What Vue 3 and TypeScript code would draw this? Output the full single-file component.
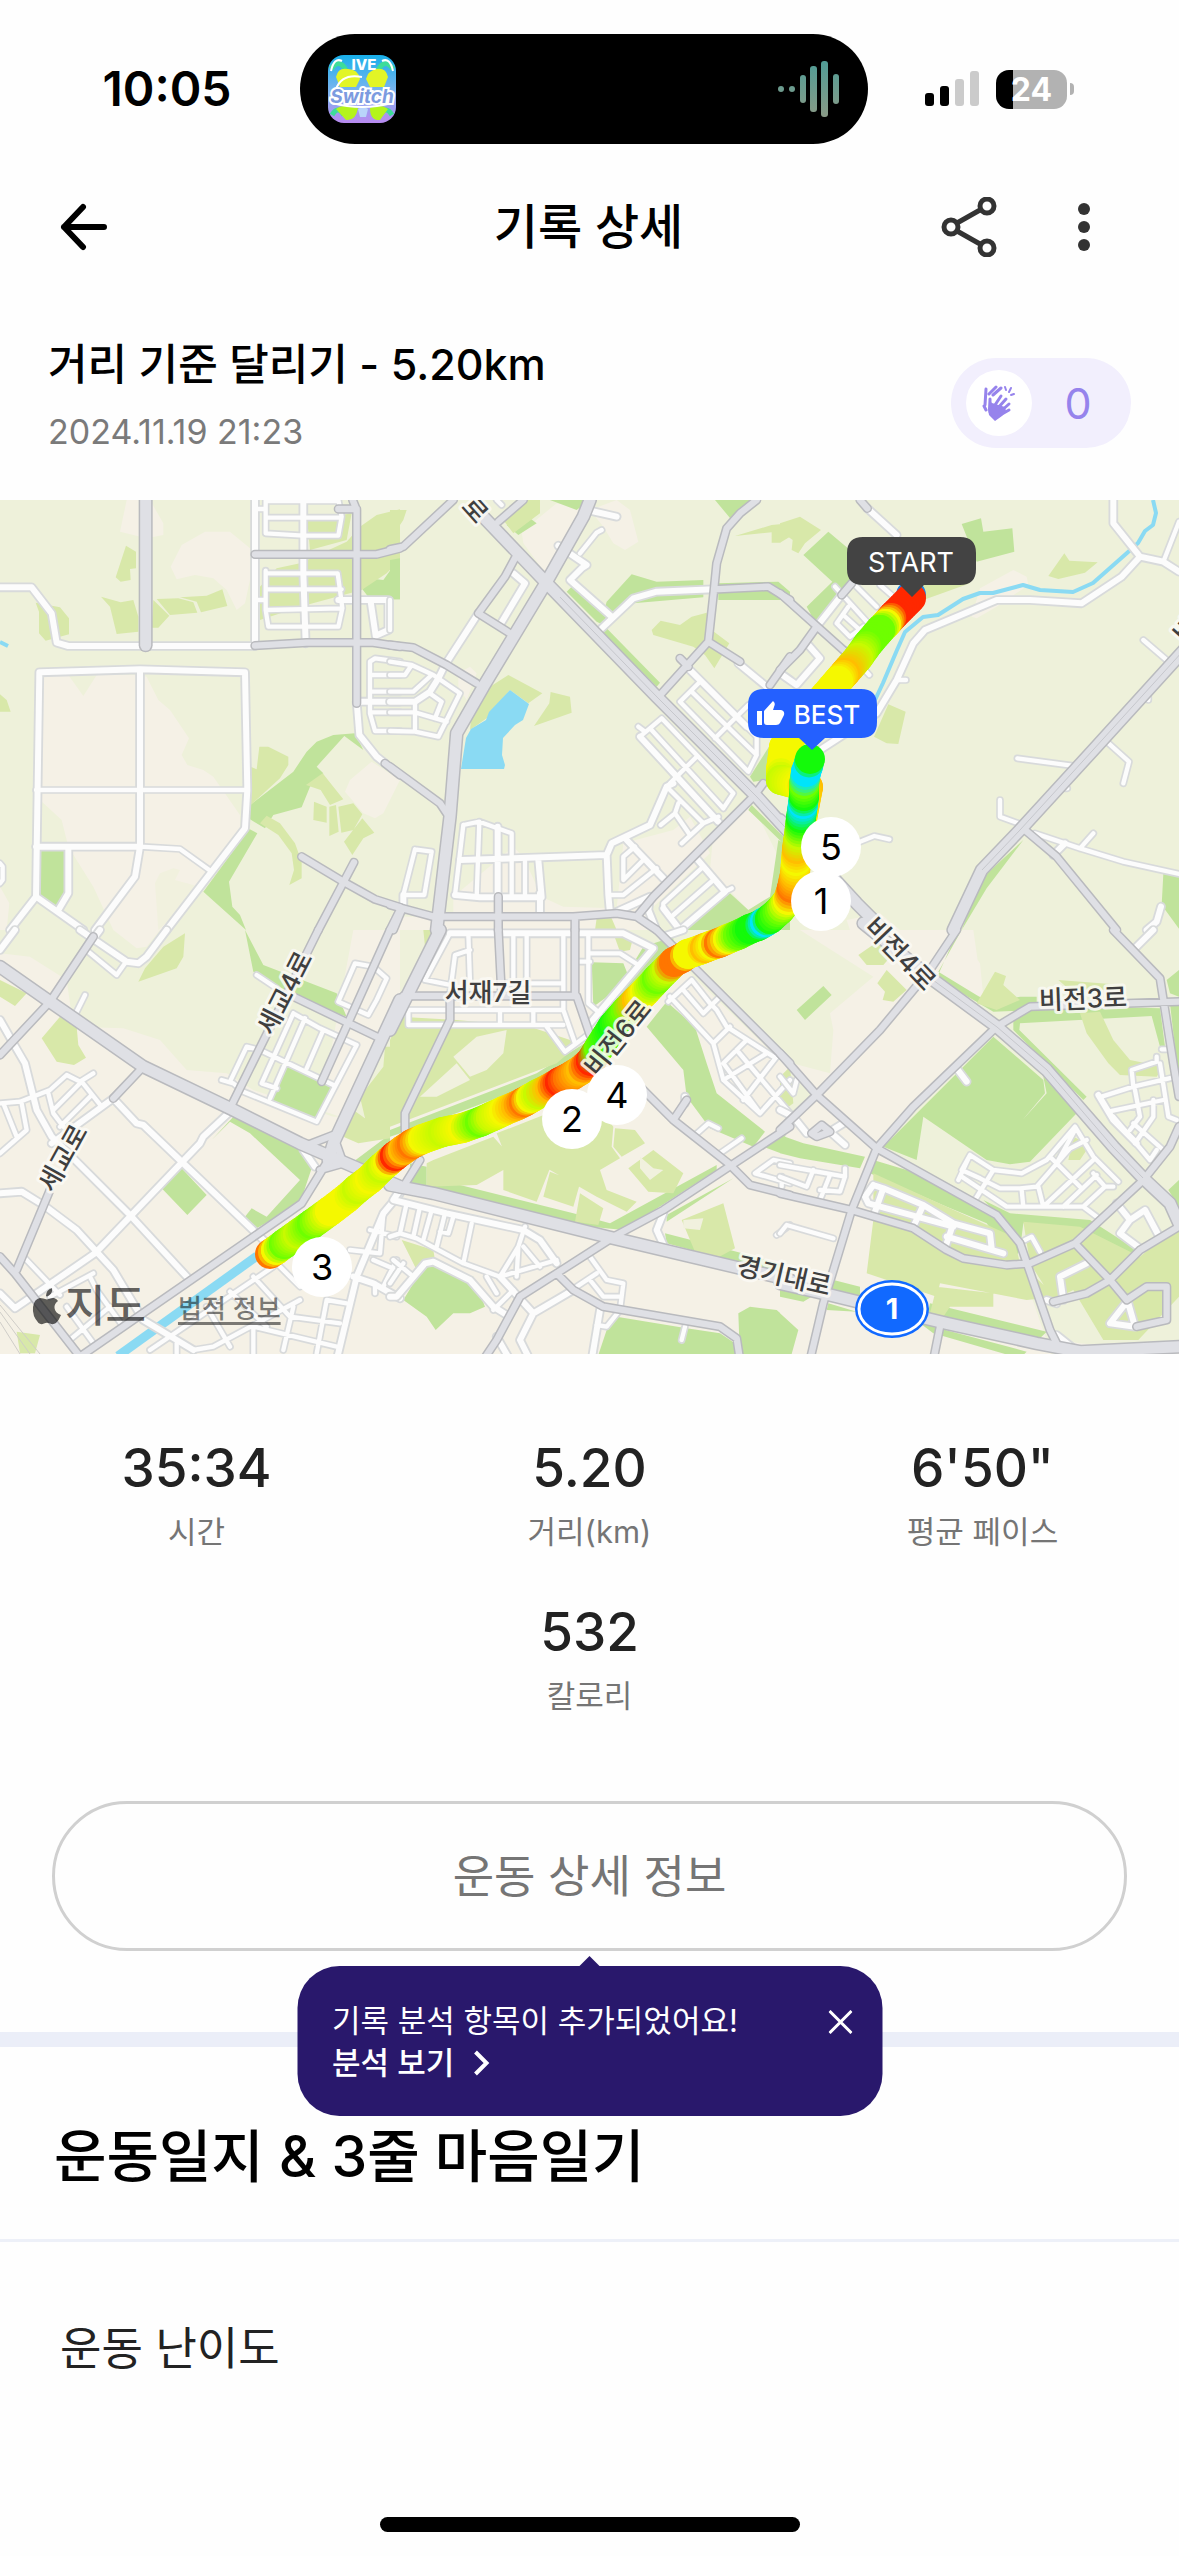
<script setup lang="ts">
interface Tile {
  x: number
  y: number
  sand: string
  land?: string
  meadow: string
  park: string
  lane: string
  street: string
  avenue: string
  highway: string
}

// Map tiles are drawn at three units per pixel, placed by their top left corner.
const tiles: Tile[] = [
  {
    x: 0,
    y: 0,
    sand: 'M125 525H205L250 588 290 525H420L440 530 475 600 510 630 567 715 545 765 562 795 610 810 640 830 720 945V1000L640 1110 500 1290H340L280 1160 205 1040 185 960 120 900ZM380 0H450L490 70V105L440 115 360 95ZM615 95H690L750 145V240L735 310 710 330 680 270 640 235 585 225 530 238 512 200 545 135ZM1035 875L1050 840 1115 785 1200 840 1150 940 1125 955 1090 940ZM0 1160L28 1210 20 1290H0Z',
    land: 'M465 1150L480 1120 520 1105 540 1110 525 1140 590 1158 560 1210 475 1290Z',
    meadow: 'M378 137L408 155V205L390 207 392 240 362 245 347 232ZM303 290L362 307 400 300 415 350V395L350 402 330 320ZM460 300L508 347 475 383H455ZM470 297L535 295 580 307 592 338 510 345ZM540 292L620 287 667 268 682 318 603 337 590 305ZM107 308L180 322 207 355V403L137 422 117 400V335ZM0 583L20 600 32 635H0ZM922 62L1055 40 1040 120 930 150ZM780 260L830 205 900 190 1040 125 1080 80 1130 45 1200 28V180L1160 220 1085 270 900 320 780 360ZM752 800L770 808 778 740H805L865 770V795L840 835 752 915ZM918 855L968 820 1000 860 1030 898 990 915 962 870ZM942 905L980 920V968L940 960ZM988 920L1008 915 1016 995 988 1008ZM1015 920L1060 910 1087 943 1060 990 1024 998ZM1087 955L1123 998 1090 1015 1057 1065 1032 1025ZM780 970L800 947 840 970 885 1030 905 1085V1135L868 1155 882 1110 875 1060 835 1005Z',
    park: 'M1085 265L1125 237 1150 240 1200 170V298H1110ZM750 915L880 815 920 755 950 725 1000 705 1065 700 1090 750 1033 708 950 800 970 820 930 860 905 922 820 945 795 985 750 958ZM748 987L772 1000 687 1145 697 1220 720 1245 738 1290 610 1175ZM120 1050H192V1180L170 1218 120 1185Z',
    lane: 'M797 0V100L910 107H1015L1025 50 1015 0M797 53H1020M797 3H1010M765 27H797M797 212V330L805 380H1015L1027 325 1020 270 1013 220H797M797 268H1025M797 330L1025 325M765 300H797M1200 485L1125 475 1110 485V640L1125 693H1200M1110 525H1200M1110 575H1200M1110 637H1200M108 870H742M420 1040L540 1047 635 1115M0 1090L8 1100V1140L0 1150',
    street: 'M0 262H95L155 340 170 428 205 438H765M765 0V437M910 0V220L917 430M1015 300H1165V390L1127 407 1112 305M1070 605H1200M1070 605L1078 705 1130 770 1155 790M118 517L420 508 735 517 742 870 735 985 635 1115 500 1290M118 517L108 1190M420 508V1040L405 1130 285 1290M108 1040H420M205 1040V1180L175 1230M30 1290L108 1190 250 1290',
    avenue: 'M765 163H1130L1200 145M1070 610V30L1058 0M1015 27H1070M765 437L920 428H1120L1200 440M905 1070L1030 1145 1125 1198 1200 1222M1062 1087L955 1290M1200 1230L1170 1290M1155 790L1200 825',
    highway: 'M437 0V436',
  },
  {
    x: 390,
    y: 0,
    sand: 'M395 95L500 10 600 20 560 120 470 225 400 130ZM600 30L680 0 720 30 745 125 705 150 670 130 640 80ZM205 520L240 500 260 520 230 600 205 560ZM970 1000L1075 920 1110 960 1160 1060V1130L1140 1190 1075 1230 960 1110ZM190 1190L370 1040 400 1070 455 1190 520 1220 680 1225 700 1030 850 990 900 950 960 1060 780 1230 800 1290H0V1250H190ZM0 840L15 850 0 890Z',
    meadow: 'M0 30H50L40 60 0 120ZM340 60L390 0H450V40L370 100ZM245 640L300 560 355 525 457 580 415 610 360 570 290 655 240 690ZM482 576L540 590 545 638 432 678 478 610ZM785 390L812 362 870 375 905 350 950 338 965 390 1018 430 973 505 945 465 910 440 790 405ZM1035 108L1145 75 1200 70V110L1170 128H1145V97ZM620 1255H665L680 1290H615Z',
    park: 'M480 0H600L560 30ZM350 75L385 105 440 70 400 40ZM0 180L30 175V298H0ZM650 305L725 223 800 245 940 240V292L730 310 650 380 620 365 530 275 545 260 640 340ZM650 385L810 548 800 560 640 400ZM975 0H1100L1025 60ZM985 250L1165 245 1200 275V300H985ZM1200 640L1080 830 1090 845 1130 840 1200 760ZM1085 915L1200 1030V1050L1075 930ZM1020 1180L1075 1230 1140 1190 1165 1020 1200 1040V1290H880Z',
    lane: 'M0 485L65 495 130 525 210 580 145 710 75 695 0 693M0 525H45L65 495M0 575H70L125 525M115 577L155 605 135 655M0 637H75L170 665M75 605V695M895 505L1100 710V765L1075 815 870 605 930 545M905 575L1100 765M975 715L1075 615M745 680L765 695M750 710L815 655 1030 880 1000 925M780 685L1000 925M920 770L840 850M840 870L940 970M865 910L855 940 812 975M855 940L900 1005M985 950L940 970 875 1030M220 975L195 1185M220 975L268 965 365 1000V1185M268 965L260 1190M405 1080V1190M655 1185H700L800 1105M735 1040L700 1070V1140L760 1080M820 1225V1210L940 1100M850 1245L970 1140M1005 1175L1025 1165M75 1048L125 1055 103 1185H40L75 1048M0 300V390M635 90L620 98 570 160M320 0L335 15',
    street: 'M605 33L680 50M505 137L590 195 575 205 540 240 665 350M635 385L730 295 800 275 970 268M370 220L405 250 330 375M265 340L165 495 145 535 120 575 75 605H0M895 505L1070 680M1045 490L1130 560M1170 520L1200 540M750 710L985 965M850 850L830 860 780 975 665 1030 650 1065 370 1075 210 1080M195 1185L270 1192H455L445 1080M323 980V1190M450 1180V1245M650 1065L655 1185 660 1240M710 1020L820 1135M670 1240L780 1190 775 1230 795 1280M915 1070L1005 1175 870 1290 820 1225M40 1185V1230',
    avenue: 'M0 148L40 140 190 0M325 65L400 0M380 165L345 230 265 340 360 400M0 435L70 443 170 495 260 550M0 800L150 910 170 940M1100 0L1050 40 1010 85 980 190 972 270 955 425 815 580M972 268L1135 260 1200 300M955 425L1050 485M895 500L870 475M1200 470L1140 555M1120 850L1090 890 920 1060 790 1190 740 1250M0 1215L130 1250H550L680 1240 740 1250 800 1290M325 1190V1290M555 1250V1290M35 1230L10 1290',
    highway: 'M600 0L580 50 470 245 280 560 200 700 180 950 140 1290M270 40L480 260 800 590 1100 890 1200 1000',
  },
  {
    x: 780,
    y: 0,
    sand: 'M575 350L600 265 700 210 740 230 745 255 650 320 590 355ZM200 1260L300 1240 360 1290H210Z',
    meadow: 'M0 70L60 50 123 90 75 130 55 160 35 150 38 120 10 100 0 130ZM853 160L868 182 953 187 915 218 835 237 805 228ZM325 613L377 635 355 732 320 730 282 710ZM430 255L570 250 430 300Z',
    park: 'M545 72L603 55 610 95 697 85 703 155 590 185ZM70 165L145 95 210 150V240L110 375 80 320 157 245ZM730 1020L620 1165 545 1290 600 1140ZM1150 1122L1200 1130V1290L1145 1215Z',
    lane: 'M165 260L265 370M230 260L290 320M300 255L340 290M205 320L170 370 210 410 250 380M190 345L240 390M350 540H378M1150 185L1197 65M1090 420L1160 480M1105 590V600M980 725L1047 785 1030 850M712 775L875 797M660 900V950L715 970M765 1000L900 1045 1030 1085 1197 1122M940 1000L900 1045M240 1025L283 1008 328 1018M855 865H862M200 450L268 525',
    street: 'M262 25L350 105M110 380L185 285M85 435L120 475 50 555 0 520M1000 0V70L1080 170 1025 230 905 310 750 300H650L435 390 400 430 350 540 290 640 120 750M1080 170L1150 185 1197 215M855 1030L820 1065M1143 1220L1130 1265 1100 1290',
    avenue: 'M240 0L262 25M0 280L190 450M215 250L185 285M110 380L60 450 0 510M735 990L830 1070 1010 1290',
    highway: 'M1240 420L940 750 720 990 605 1110 520 1290M0 960L230 1210 310 1290',
  },
  {
    x: 0,
    y: 430,
    sand: 'M0 70L90 80 200 150 220 290 370 295 480 330 560 420 680 430 760 480 1000 560H1200V1290H0ZM340 0H480L440 50 410 55ZM1060 0H1200V200L1020 560 960 540Z',
    meadow: 'M555 10L550 80 530 115 415 155 435 115 490 50ZM180 260L230 290 235 345 258 383 222 405 170 395 125 325ZM0 150L80 190 45 228 0 200ZM1155 350L1200 350V620L1075 640 1030 620 1060 540 1095 565 1080 500 1150 410ZM50 1205L120 1215 105 1270H60Z',
    park: 'M735 0L790 105 1010 190 1040 260 900 210 760 125ZM865 405L1000 465 950 565 815 510ZM700 560L900 650 940 700 900 820 770 895 735 860 755 835 800 860 900 750 750 610 690 575 635 630ZM545 715L620 795 562 855 485 775ZM1060 695L1200 590V740L1100 720Z',
    lane: 'M265 65L350 135 375 100M255 195L230 245M0 520L60 515 150 480 200 435 240 455 280 430M245 455L305 530M145 490L160 550 190 590M160 540L240 460M180 590L275 495M10 520L50 620M65 520L80 600 0 670M75 985L180 1095M215 1225L330 1130M270 1040L290 1080 370 1190M280 1240L200 1130M150 1100L280 1030M1015 215L1065 100 1120 110 1160 145 1130 210 1105 255ZM880 250L785 460 830 475M665 450L700 460 730 485 950 575 1070 345 960 295 880 250M690 455L740 350 780 360 1000 465M915 265L810 505M970 300L920 415M770 135L830 175M450 1260L835 1000M530 1290V1240M580 1260L640 1250 900 1110M690 1085L800 1190M760 1040L870 1160M830 1000L900 1070M1050 960L1140 970 1150 850M1110 900L1190 920M1120 990L1190 1020M760 1190L1010 1250M870 1160L1020 1180M850 1260L880 1130M950 1270L980 1110 1040 1120M620 1130L690 1250M760 1190V1290M1125 1060V1090M1190 990L1150 1070',
    street: 'M0 60L45 0M240 0L380 95 415 100 440 80 500 0M285 20L300 0M0 270L40 340 75 400 110 540 155 620 390 855 565 1045M155 640L340 505 410 580 430 585 790 930M685 550L610 620 600 640 285 970 45 1135 0 1090M0 790L65 785 130 825 230 900 340 1020 430 1170 580 1260M1200 790L1150 850 1070 1040 1010 1290M1060 1040L1120 1060 1200 1105M910 660L945 710',
    avenue: 'M280 20L150 215 0 375M955 0L690 535M1170 0L965 455M880 200L1130 320M430 410L340 505M150 780L50 1020M0 980L45 1030 240 1280M910 650L1000 615 1030 700 960 720M985 690L905 820 870 845 240 1280',
    highway: 'M0 110L150 215 430 410 690 535 900 640 1200 770M1200 210L1000 640 985 690',
  },
  {
    x: 390,
    y: 430,
    sand: 'M0 250L30 200 150 0H700L830 100 900 130 1200 420V1290H0Z',
    meadow: 'M30 260L200 270 420 290 570 340 500 400 0 590V330ZM320 610L600 500 670 590 665 650 690 685 630 720 650 780 740 815 710 845 620 800 480 720 340 660ZM130 690L310 620 345 660 480 715 440 815 340 780V720L260 765 110 770V700ZM675 595L735 600 765 640 695 680 670 650ZM790 660L880 730 850 790 775 785 715 715ZM480 725L570 760 550 830 460 800ZM570 790L640 835 625 885 555 875ZM875 870L1000 820 1035 955 980 985 915 965ZM35 930L130 960 135 990 80 1020ZM670 10L730 20 720 60 690 65ZM100 0H160L110 100Z',
    land: 'M260 320L350 300 340 370 290 420 240 440 190 380ZM750 680L790 715 820 720 780 750 750 715ZM880 870L940 865 930 900 880 895ZM90 500L200 400 240 450 140 500Z',
    park: 'M0 600L440 430 600 330 700 150 760 50 850 20V60L600 400 90 590 0 620ZM605 97L700 100 720 150 610 230ZM60 700L110 710V765H185V730H210V765L550 850 660 880 980 705V720L700 900 550 885 60 760ZM770 290L830 215 915 290 950 400 980 490 1125 605 1090 650 960 595 890 500 880 420ZM1120 650L1200 610V680ZM40 1110L100 1010 130 995 250 1040 285 1130 240 1150 190 1150 137 1200 110 1160ZM680 1160L890 1195 990 1210 1035 1240 1040 1290H620L650 1200ZM1045 1150L1080 1130 1160 1140 1200 1175V1290H1050ZM825 910L1040 965 1200 1010V1040L830 940ZM1030 745L830 875V855Z',
    lane: 'M180 10L105 150 180 165M235 10L240 160M240 60L195 75 180 190M370 10V160M410 10V160M520 10V240M335 160H520M595 10V220L630 250M600 70H690L745 105M560 95H600M55 240H520L555 340M55 240V285H520M330 240V285M430 240V280M470 290L525 365 600 310M905 150L835 215M905 150L960 220 980 240 1010 290 1150 380M840 200L970 340 1000 450 1110 550 1200 450M880 180L940 250 990 200M970 340L1020 290M1000 400L1070 330M1000 450L1130 370M1060 510L1160 380M1040 360L1200 550M1000 400L1110 550M910 620L955 580 985 595M990 670L1055 625M1200 700L1150 690 1095 730 1200 760M1175 740V770M50 820L30 910 0 920M90 830L70 920M125 840L100 930M165 850L140 950M190 860L175 910 150 905M30 910L80 925 220 1000 330 1040 500 990M245 880L220 1000M405 890L385 950 330 1040M400 950L450 1010M385 950L380 1040M290 1040L320 1090M370 1080L310 1140M600 980L650 1050 700 1060 690 1140 650 1190 620 1185M500 1110L620 1030M600 1050L640 1100H690M885 1190L875 1230M1160 915L1200 885M10 990L70 1040M0 1060L40 1000',
    street: 'M180 10H700L790 55 600 280M820 20L880 0M30 780L10 810 170 850 400 900 450 930 500 1000M330 1040L430 1150 390 1230 420 1290M430 1150L550 1080M0 1100H20L105 1000 130 995 240 1050 310 1130 350 1155M630 1140L605 1290M820 850L800 900 825 955M885 500V520M320 1220L360 1290',
    avenue: 'M40 198H560L600 315M555 0V198M325 0L335 198M180 200V270L45 550V600M90 690L40 770M1200 590L820 840 680 915 500 1030 390 1100 320 1230 280 1290M800 0L1200 400M740 460L850 570 1015 700 1080 765 1200 795M850 570L890 510M500 1030L550 1080 640 1130 990 1190 1040 1225 1050 1290',
    highway: 'M150 0L0 300M0 765L130 790 650 920 1200 1050',
  },
  {
    x: 780,
    y: 430,
    sand: 'M60 0H530L600 100 610 200 450 170 640 300 300 640 620 900 720 1000 820 1290H0V640L110 495 0 390 150 430 160 300 150 250 280 140ZM530 0H580L600 140 480 130ZM560 560L600 390 640 440 690 500 695 560 660 620 620 640ZM900 1290L840 1230 900 1240 1200 1270V1290Z',
    land: 'M690 270L1110 250 1140 400 1200 500V900L1090 760 800 440ZM650 330L790 450 795 490 690 620 610 650 560 560 550 520 430 555ZM410 690L470 597 640 655 730 700 860 610 1000 720 1040 800 940 870 680 840 540 780Z',
    meadow: 'M235 75L300 30 350 60 310 105 260 105ZM320 120L380 180 340 215 308 210 315 185 292 160ZM590 220L645 125 678 138 670 165 720 210 650 240ZM835 150L1030 165 1020 180 870 180ZM900 250L960 245 1000 330 1050 390 1150 410 1130 440 1020 435 985 400 920 310ZM280 730L500 830 700 920 720 1000 830 1100 740 1110 480 1060 470 1100 260 1030 280 870ZM730 875L900 890 1080 980 1197 880V1100L1075 1230H970L880 1080 820 1110 750 1000ZM865 690L880 620 930 645 900 690ZM470 1070L640 1090 640 1130 510 1130 490 1160 450 1150ZM0 440L30 410 40 520 0 550Z',
    park: 'M530 10L545 0 475 125 630 220 720 200 770 200V240L640 245 470 145ZM50 240L130 168 155 195 75 270ZM700 260L790 225 1140 235 1155 350 1140 350 1115 258 720 280 718 300 920 500 910 510 700 300ZM640 320L790 450 795 490 660 650 610 655 430 560 410 690 310 650ZM430 560L610 655 660 645 800 490 790 440 890 550 750 695 690 703 620 690ZM0 615L70 640 255 680 240 715 60 685 0 670ZM280 690L380 720 650 860 720 960 700 990 620 880 500 830 270 730ZM610 810L690 850 930 870 1070 960 1040 1010 930 910 730 880 720 960 660 860ZM140 1045L240 1070V1100L150 1080ZM450 1120L800 1205 780 1225 440 1160ZM145 1120L230 1145 140 1140ZM420 1180L740 1265 720 1285 460 1210ZM0 1150L55 1200 30 1290H0ZM1160 150L1197 120V200L1170 190ZM1170 220H1197V460ZM1165 780L1197 750V830ZM0 1080L95 1100 70 1115 0 1100Z',
    lane: 'M535 750L570 675 640 720 725 730 800 690 885 590 940 680 1015 755M570 675L545 720 600 745M545 740L680 830H910L950 860M640 720L585 810M600 745L660 775H720L770 770 870 655 920 630M725 780L730 830M775 770L790 830 945 685M810 680L900 770M850 830L950 735M885 600L830 700M910 830L975 770M1000 770L975 770 940 730M965 500L1060 470 1190 440M1060 470L1055 420 1130 395V380M985 545L1150 510M1065 480L1080 560 1050 600M1120 510V560L1065 640M1000 560L1110 690 1130 660M1140 400L1165 560 1190 570M1060 580L1150 660M0 705L195 740 180 785 120 780M100 720L80 770M150 735L120 810M195 740V715M0 740L80 770M0 910L20 885 160 925M735 930L755 920 780 965M1145 358H1165M0 440L40 490 50 450',
    street: 'M280 765L255 800 265 820 520 890M310 775L430 825 520 880 630 910 635 955M310 775L285 845M430 825L400 890M520 880L495 955M500 920L670 970M280 765L310 775M530 415L560 455M0 540L40 560 80 610M150 605L190 580M150 605L195 645M955 495L1000 570 1070 640M1010 820L1050 870 1095 840 1135 915M1050 870L1020 910 1080 955M920 1000L840 1040 850 1110M800 1110L830 1120M1045 1110L990 1180 1065 1190 1045 1120M1070 50L1120 0M830 1215L880 1255',
    avenue: 'M530 0L450 120 300 300 110 495 0 600M650 290L750 230 1197 215M1000 0L1140 145 1180 400 1197 500M650 290L400 530 290 655 215 840 130 1120 90 1290M0 370L110 495 290 655 650 855 720 940 810 1200 830 1240M0 790L215 840 400 895 500 960 550 985 680 1005 750 1000 885 940 1090 750 1170 650 1197 590M885 940L990 1050 1040 1110 1100 1070H1160V1170L1070 1190M990 1050L1080 960 1197 890M990 1050L920 1090 820 1115M480 1190L460 1290M95 610L125 585 150 605 110 620Z',
    highway: 'M250 -20L460 150 650 290 800 420 1000 650 1090 745 1170 820 1197 880M0 1060L130 1090 500 1180 770 1240 900 1265 1197 1250',
  },
]

type Rgb = [number, number, number]
type Stop = [number, number, Rgb]

const red: Rgb = [255, 40, 0]
const orange: Rgb = [255, 118, 0]
const amber: Rgb = [255, 190, 0]
const yellow: Rgb = [245, 248, 0]
const lime: Rgb = [200, 250, 0]
const leaf: Rgb = [110, 255, 0]
const green: Rgb = [20, 250, 10]
const cyan: Rgb = [0, 228, 250]
const blue: Rgb = [30, 130, 230]

// Each stop carries the runner's pace as a colour; the outward leg lies under the return leg.
const outward: Stop[] = [
  [911, 98, red], [893, 116, red], [886, 124, yellow], [880, 130, leaf], [868, 144, leaf],
  [858, 158, lime], [845, 173, amber], [838, 181, yellow], [800, 225, yellow], [784, 247, yellow],
  [781, 270, yellow], [781, 280, lime], [800, 285, yellow], [808, 287, amber], [800, 330, yellow],
]
const homeward: Stop[] = [
  [270, 754, orange], [276, 750, yellow], [284, 744, leaf], [298, 734, lime], [312, 724, leaf],
  [330, 711, yellow], [347, 698, yellow], [357, 689, lime], [370, 679, yellow], [381, 668, lime],
  [388, 662, yellow], [395, 656, red], [403, 650, amber], [412, 644, orange], [423, 639, yellow], [443, 632, lime],
  [463, 628, yellow], [480, 622, leaf], [491, 617, lime], [504, 611, yellow], [516, 606, amber], [524, 602, orange],
  [531, 598, yellow], [538, 594, lime], [550, 588, amber], [560, 582, red], [568, 578, orange], [581, 570, amber],
  [591, 561, red], [599, 548, leaf], [613, 526, green], [626, 511, leaf], [637, 500, amber],
  [645, 492, yellow], [657, 479, leaf], [667, 469, lime], [674, 462, orange], [682, 458, orange],
  [688, 454, yellow], [700, 450, yellow], [705, 448, amber], [713, 445, yellow], [719, 443, orange], [728, 439, yellow],
  [738, 435, leaf], [750, 429, green], [758, 426, green], [765, 422, cyan], [770, 419, green], [780, 410, leaf],
  [788, 400, yellow], [792, 388, orange], [795, 374, amber], [796, 361, yellow], [797, 349, amber],
  [799, 335, lime], [801, 318, green], [803, 304, cyan], [804, 296, green], [804, 284, leaf], [806, 272, cyan],
  [808, 266, cyan], [810, 259, green],
]

function discs(stops: Stop[]) {
  const out: { x: number; y: number; fill: string }[] = []
  for (let i = 0; i < stops.length - 1; i++) {
    const [x1, y1, c1] = stops[i]
    const [x2, y2, c2] = stops[i + 1]
    const steps = Math.max(1, Math.round(Math.hypot(x2 - x1, y2 - y1) / 3))
    for (let s = 0; s <= steps; s++) {
      const t = s / steps
      const rgb = c1.map((v, k) => Math.round(v + (c2[k] - v) * t))
      out.push({ x: x1 + (x2 - x1) * t, y: y1 + (y2 - y1) * t, fill: `rgb(${rgb.join(',')})` })
    }
  }
  return out
}

const trail = [{ x: 911, y: 95, fill: `rgb(${blue.join(',')})` }, ...discs(outward), ...discs(homeward)]

const roadNames = [
  { text: '세교4로', x: 285, y: 493, turn: -63 },
  { text: '세교로', x: 63, y: 658, turn: -61 },
  { text: '서재7길', x: 488, y: 493, turn: 0 },
  { text: '비전6로', x: 618, y: 538, turn: -51 },
  { text: '비전4로', x: 900, y: 454, turn: 46 },
  { text: '비전3로', x: 1083, y: 499, turn: -2 },
  { text: '경기대로', x: 784, y: 776, turn: 13 },
  { text: '로', x: 475, y: 10, turn: 48 },
  { text: '비', x: 1186, y: 130, turn: -48 },
]

const kmMarks = [
  { n: 5, x: 831, y: 347 },
  { n: 1, x: 821, y: 401 },
  { n: 4, x: 617, y: 595 },
  { n: 2, x: 572, y: 619 },
  { n: 3, x: 322, y: 767 },
]

const stats = [
  { value: '35:34', label: '시간' },
  { value: '5.20', label: '거리(km)' },
  { value: '6\'50"', label: '평균 페이스' },
  { value: '532', label: '칼로리' },
]
</script>

<template>
  <div class="screen">
    <div class="status">
      <span class="clock">10:05</span>
      <div class="island">
        <svg class="cover" viewBox="0 0 68 68" aria-hidden="true">
          <defs>
            <linearGradient id="cover-bg" x1="0" y1="0" x2="0" y2="1">
              <stop offset="0" stop-color="#18b0ea" />
              <stop offset=".55" stop-color="#7fb4f0" />
              <stop offset="1" stop-color="#b98af0" />
            </linearGradient>
            <clipPath id="cover-clip"><rect width="68" height="68" rx="16" /></clipPath>
          </defs>
          <g clip-path="url(#cover-clip)">
            <rect width="68" height="68" fill="url(#cover-bg)" />
            <path d="M3 14Q10 4 16 12T10 24M65 14Q58 4 52 12T58 24M4 60Q10 50 16 60M64 60Q58 50 52 60" fill="none" stroke="#3ddc9a" stroke-width="5" />
            <path d="M8 22Q10 12 20 14Q30 14 32 24L28 32H12ZM60 22Q58 12 48 14Q40 16 38 24L42 32H56Z" fill="#e2f526" />
            <path d="M8 54Q16 48 30 53Q28 66 18 65ZM60 54Q52 48 42 53Q42 66 52 65Z" fill="#b4f41c" />
            <path d="M30 54Q35 50 40 54L38 62H32Z" fill="#b9d5fa" />
            <path d="M3 16Q6 2 14 6M65 16Q62 2 54 6M4 48Q34 56 64 48M8 34Q14 18 34 22" fill="none" stroke="#fff" stroke-width="2" />
            <text x="36" y="15" class="cover-top">IVE</text>
            <text x="34" y="48" class="cover-name">Switch</text>
          </g>
        </svg>
        <svg class="wave" viewBox="0 0 62 58" aria-hidden="true">
          <defs>
            <linearGradient id="wave-ink" gradientUnits="userSpaceOnUse" x1="0" y1="0" x2="0" y2="58">
              <stop offset="0" stop-color="#4f9c96" />
              <stop offset="1" stop-color="#8a9a86" />
            </linearGradient>
          </defs>
          <g fill="url(#wave-ink)">
            <circle cx="3" cy="29" r="3" /><circle cx="14" cy="29" r="3" />
            <rect x="22" y="15" width="6" height="28" rx="3" />
            <rect x="32" y="6" width="7" height="46" rx="3" />
            <rect x="43" y="1" width="7" height="56" rx="3" />
            <rect x="55" y="14" width="6" height="30" rx="3" />
          </g>
        </svg>
      </div>
      <div class="radios">
        <svg class="signal" viewBox="0 0 54 36" aria-hidden="true">
          <rect x="0" y="22" width="9" height="13" rx="3" />
          <rect x="15" y="15" width="9" height="20" rx="3" />
          <rect x="30" y="8" width="9" height="27" rx="3" fill="#cbcbcb" />
          <rect x="45" y="0" width="9" height="35" rx="3" fill="#cbcbcb" />
        </svg>
        <div class="battery">24</div>
      </div>
    </div>

    <header class="nav">
      <button class="icon-btn" type="button" aria-label="뒤로">
        <svg width="48" height="48" viewBox="0 0 48 48"><path d="M23 4L4 24 23 44M4 24H44" fill="none" stroke="#000" stroke-width="6" stroke-linecap="round" stroke-linejoin="round" /></svg>
      </button>
      <h1>기록 상세</h1>
      <div class="nav-actions">
        <button class="icon-btn" type="button" aria-label="공유">
          <svg width="56" height="60" viewBox="0 0 56 60"><g fill="none" stroke="#333" stroke-width="5"><path d="M16 26L39 13M16 34L39 47" /><circle cx="10" cy="30" r="7" /><circle cx="46" cy="9" r="7" /><circle cx="46" cy="51" r="7" /></g></svg>
        </button>
        <button class="icon-btn" type="button" aria-label="더보기">
          <svg width="14" height="48" viewBox="0 0 14 48" fill="#333"><circle cx="7" cy="6" r="6" /><circle cx="7" cy="24" r="6" /><circle cx="7" cy="42" r="6" /></svg>
        </button>
      </div>
    </header>

    <section class="record">
      <div>
        <h2>거리 기준 달리기 - 5.20km</h2>
        <time datetime="2024-11-19T21:23">2024.11.19 21:23</time>
      </div>
      <button class="cheer" type="button" aria-label="응원 0">
        <span class="cheer-icon">
          <svg width="36" height="36" viewBox="0 0 36 36" fill="none" stroke="#9683ec" stroke-linecap="round">
            <path d="M8 15L11 18 24 22 25 26 21 31 14 36 8 30 7 24Z" fill="#9683ec" stroke="none" />
            <path d="M9 27V14M12 23L20 11M16 24L25 14M19 27L28 19M21 29L28 25" stroke-width="3" />
            <path d="M4 20L5 4M3 21L5 25M8 9L15 2M12 10L20 3" stroke-width="3" />
            <path d="M25 5L24 2M28 7L30 3M30 10L33 9" stroke-width="2" />
          </svg>
        </span>
        <span class="cheer-count">0</span>
      </button>
    </section>

    <section class="map" aria-label="달린 경로">
      <svg viewBox="0 0 1179 854" role="img" aria-label="지도">
        <rect width="1179" height="854" fill="#eef1da" />
        <g v-for="(t, i) in tiles" :key="`g${i}`" :transform="`translate(${t.x} ${t.y}) scale(.33333)`">
          <path :d="t.sand" fill="#f5f1e6" />
          <path v-if="t.land && i === 5" :d="t.land" fill="#eef1da" />
          <path :d="t.park" fill="#c0e39b" />
          <path :d="t.meadow" fill="#d8e8a9" />
          <path v-if="t.land && i !== 5" :d="t.land" fill="#f1f1de" />
        </g>
        <g fill="none" stroke="#8adaf3" stroke-linejoin="round">
          <path d="M510 190L529 204 523 220 515 225 503 238 502 255 505 265 504 269H461L466 238 471 229 486 220 489 212Z" fill="#8adaf3" stroke="none" />
          <path d="M1153 0L1156 13 1153 25 1145 31 1138 43 1127 53 1093 83 1073 92 1040 90 1023 85 993 93 980 93 963 99 938 115 923 117 905 132 897 150 883 183 875 200" stroke-width="4" />
          <path d="M0 142L8 146" stroke-width="4" />
          <path d="M257 756L118 856" stroke-width="9" />
        </g>
        <path d="M0 805L40 854M0 812L30 854M0 822L20 854" fill="none" stroke="#cfcdc8" stroke-width="1" />
        <g v-for="(t, i) in tiles" :key="`l${i}`" class="road" :transform="`translate(${t.x} ${t.y}) scale(.33333)`">
          <path :d="t.lane" stroke="#d8dadb" stroke-width="23" />
          <path :d="t.street" stroke="#d8dadb" stroke-width="29" />
          <path :d="t.lane" stroke="#fcfcfc" stroke-width="13" />
          <path :d="t.street" stroke="#fcfcfc" stroke-width="18" />
        </g>
        <g v-for="(t, i) in tiles" :key="`c${i}`" class="road" :transform="`translate(${t.x} ${t.y}) scale(.33333)`">
          <path :d="t.avenue" stroke="#b9babe" stroke-width="28" />
          <path :d="t.highway" stroke="#b9babe" stroke-width="42" />
        </g>
        <g v-for="(t, i) in tiles" :key="`f${i}`" class="road" :transform="`translate(${t.x} ${t.y}) scale(.33333)`">
          <path :d="t.avenue" stroke="#dfe0e5" stroke-width="19" />
          <path :d="t.highway" stroke="#dfe0e5" stroke-width="33" />
        </g>
        <path d="M560 97L657 197 757 297 850 397M933 480L997 527 1047 570 1113 647 1143 678M1193 140L1093 250 1020 330 982 370" fill="none" stroke="#c6c7cc" stroke-width="1" />

        <circle v-for="(d, i) in trail" :key="i" :cx="d.x" :cy="d.y" r="15" :fill="d.fill" />

        <text
          v-for="r in roadNames"
          :key="r.text"
          class="road-name"
          :transform="`translate(${r.x} ${r.y}) rotate(${r.turn})`"
          dy="9"
        >{{ r.text }}</text>

        <ellipse cx="892" cy="809" rx="37" ry="29" fill="#1169ff" />
        <ellipse cx="892" cy="809" rx="33" ry="25" fill="#1169ff" stroke="#fff" stroke-width="3" />
        <text class="shield" x="892" y="819">1</text>

        <g v-for="k in kmMarks" :key="k.n">
          <circle :cx="k.x" :cy="k.y" r="30" fill="#fff" />
          <text class="km" :x="k.x" :y="k.y + 13">{{ k.n }}</text>
        </g>

        <path d="M863 37H960Q976 37 976 53V69Q976 85 960 85H924L912 97 900 85H863Q847 85 847 69V53Q847 37 863 37Z" fill="#434343" />
        <text class="flag" x="911" y="72">START</text>

        <path d="M764 189H861Q877 189 877 205V222Q877 238 861 238H825L812 250 799 238H764Q748 238 748 222V205Q748 189 764 189Z" fill="#2460ff" />
        <path d="M757 211H762V225H757ZM764 211L773 201Q776 203 774 207L773 210H781Q785 211 784 215L780 223Q779 225 776 225H767Q764 225 764 222Z" fill="#fff" />
        <text class="flag flag-best" x="827" y="224">BEST</text>
      </svg>
      <div class="map-credit">
        <span class="map-brand">
          <svg width="30" height="38" viewBox="0 0 30 38" aria-hidden="true">
            <path d="M20 1Q21 6 17 8.500Q15 10 14 9Q14 3 20 1ZM26 14Q22 17 22.500 21Q23 26 29 28Q27 33 24 36Q21 38 18 36.500Q15 35 12 36.500Q9 38 6.500 36Q0 29 1 20Q2 12 8 11Q11 11 15 12.500Q19 10.500 22 11Q25 12 26 14Z" />
          </svg>
          <span>지도</span>
        </span>
        <a href="#legal">법적 정보</a>
      </div>
    </section>

    <dl class="stats">
      <div v-for="s in stats" :key="s.label" class="stat">
        <dt>{{ s.label }}</dt>
        <dd>{{ s.value }}</dd>
      </div>
    </dl>

    <div class="detail">
      <button class="detail-btn" type="button">운동 상세 정보</button>
      <div class="tip" role="status">
        <div class="tip-text">
          <p>기록 분석 항목이 추가되었어요!</p>
          <a href="#analysis">분석 보기
            <svg width="18" height="26" viewBox="0 0 18 26" aria-hidden="true"><path d="M3 2L14 13 3 24" fill="none" stroke="#fff" stroke-width="4" /></svg>
          </a>
        </div>
        <button class="tip-close" type="button" aria-label="닫기">
          <svg width="24" height="24" viewBox="0 0 24 24"><path d="M1 1L23 23M23 1L1 23" stroke="#fff" stroke-width="3" /></svg>
        </button>
      </div>
    </div>

    <section class="diary">
      <h2>운동일지 &amp; 3줄 마음일기</h2>
      <h3>운동 난이도</h3>
    </section>

    <div class="home-bar"></div>
  </div>
</template>

<style>
body {
  margin: 0;
  background: #fefefe;
}
</style>

<style scoped>
.screen {
  display: flex;
  flex-direction: column;
  min-height: 100vh;
  box-sizing: border-box;
  padding-bottom: 24px;
  background: #fefefe;
  color: #000;
  font-family: Inter, "Noto Sans CJK KR", sans-serif;
}
h1, h2, h3, p, dl, dd {
  margin: 0;
}
button {
  border: 0;
  padding: 0;
  background: none;
  color: inherit;
  font: inherit;
}
svg {
  display: block;
}
.status {
  display: grid;
  grid-template-columns: 1fr 568px 1fr;
  align-items: center;
  padding: 34px 11px 0 0;
}
.clock {
  padding-left: 34px;
  text-align: center;
  font-size: 48px;
  font-weight: 600;
  line-height: 60px;
}
.island {
  display: flex;
  align-items: center;
  justify-content: space-between;
  height: 110px;
  box-sizing: border-box;
  padding: 0 28px;
  border-radius: 55px;
  background: #000;
}
.cover {
  width: 68px;
  height: 68px;
}
.cover-top {
  fill: #fff;
  font: 800 15px Inter, sans-serif;
  text-anchor: middle;
}
.cover-name {
  fill: #7c9be0;
  stroke: #fff;
  stroke-width: 4px;
  paint-order: stroke;
  font: italic 700 19px Inter, sans-serif;
  text-anchor: middle;
}
.wave {
  width: 62px;
  height: 58px;
}
.radios {
  display: flex;
  align-items: center;
  gap: 17px;
  padding-left: 57px;
}
.signal {
  width: 54px;
  height: 36px;
}
.battery {
  position: relative;
  width: 71px;
  height: 39px;
  border-radius: 13px;
  background: linear-gradient(90deg, #000 17px, #b2b2b2 17px);
  color: #fff;
  font-size: 32px;
  font-weight: 700;
  line-height: 39px;
  text-align: center;
}
.battery::after {
  content: "";
  position: absolute;
  top: 13px;
  right: -7px;
  width: 4px;
  height: 12px;
  border-radius: 0 4px 4px 0;
  background: #b2b2b2;
}
.nav {
  display: grid;
  grid-template-columns: 1fr auto 1fr;
  align-items: center;
  height: 166px;
  padding: 0 88px 0 60px;
}
.nav h1 {
  padding-left: 26px;
  font-size: 48px;
  font-weight: 500;
  line-height: 60px;
}
.nav-actions {
  display: flex;
  align-items: center;
  justify-content: flex-end;
  gap: 80px;
}
.record {
  display: flex;
  align-items: center;
  justify-content: space-between;
  padding: 30px 48px 38px;
}
.record h2 {
  margin-bottom: 14px;
  font-size: 43px;
  font-weight: 500;
  line-height: 48px;
}
.record time {
  display: block;
  color: #7a7a7a;
  font-size: 34px;
  line-height: 60px;
}
.cheer {
  display: flex;
  align-items: center;
  width: 180px;
  height: 90px;
  box-sizing: border-box;
  margin-top: 4px;
  padding: 0 7px 0 15px;
  border-radius: 45px;
  background: #f2effd;
  color: #9683ec;
}
.cheer-icon {
  display: grid;
  place-items: center;
  width: 66px;
  height: 66px;
  border-radius: 50%;
  background: #fff;
}
.cheer-count {
  flex: 1;
  font-size: 43px;
  text-align: center;
}
.map {
  position: relative;
}
.map > svg {
  width: 100%;
  height: auto;
}
.road path {
  fill: none;
  stroke-linecap: round;
  stroke-linejoin: round;
}
.road-name {
  fill: #3f3f3f;
  stroke: #fbfaf5;
  stroke-opacity: .85;
  stroke-width: 6px;
  stroke-linejoin: round;
  paint-order: stroke;
  font-size: 26px;
  font-weight: 500;
  text-anchor: middle;
}
.shield {
  fill: #fff;
  font-size: 29px;
  font-weight: 700;
  text-anchor: middle;
}
.km {
  fill: #000;
  font-size: 36px;
  text-anchor: middle;
}
.flag {
  fill: #fff;
  font-size: 27px;
  text-anchor: middle;
}
.flag-best {
  font-size: 26px;
  font-weight: 500;
}
.map-credit {
  position: absolute;
  left: 32px;
  bottom: 24px;
  display: flex;
  align-items: center;
  gap: 32px;
  color: rgba(0, 0, 0, .62);
}
.map-brand {
  display: flex;
  align-items: center;
  gap: 3px;
  font-size: 44px;
  font-weight: 500;
  line-height: 48px;
}
.map-brand svg {
  fill: currentColor;
}
.map-credit a {
  color: rgba(0, 0, 0, .5);
  font-size: 26px;
  font-weight: 500;
  text-decoration-thickness: 3px;
  text-underline-offset: 4px;
}
.stats {
  display: flex;
  flex-wrap: wrap;
  justify-content: center;
  row-gap: 48px;
  padding-top: 82px;
}
.stat {
  display: flex;
  flex-direction: column-reverse;
  gap: 12px;
  width: calc(100% / 3);
  text-align: center;
}
.stat dt {
  color: #757575;
  font-size: 31px;
  line-height: 40px;
}
.stat dd {
  color: #222;
  font-size: 53px;
  font-weight: 500;
  line-height: 64px;
}
.detail {
  position: relative;
  padding: 85px 52px 81px;
  border-bottom: 15px solid #ebeef8;
}
.detail-btn {
  display: block;
  width: 100%;
  height: 150px;
  box-sizing: border-box;
  padding-bottom: 6px;
  border: 3px solid #d0d0d0;
  border-radius: 75px;
  color: #757575;
  font-size: 45px;
}
.tip {
  position: absolute;
  top: 250px;
  left: 50%;
  display: flex;
  align-items: flex-start;
  justify-content: space-between;
  width: 585px;
  height: 150px;
  box-sizing: border-box;
  padding: 34px 30px 0 35px;
  border-radius: 42px;
  background: #29186c;
  color: #fff;
  font-size: 31px;
  line-height: 42px;
  transform: translateX(-50%);
}
.tip::before {
  content: "";
  position: absolute;
  top: -10px;
  left: 50%;
  border: 10px solid transparent;
  border-top: 0;
  border-bottom-color: #29186c;
  transform: translateX(-50%);
}
.tip p {
  white-space: nowrap;
}
.tip a {
  display: flex;
  align-items: center;
  gap: 18px;
  color: #fff;
  font-weight: 500;
  text-decoration: none;
}
.tip-close {
  padding: 10px 0;
}
.diary h2 {
  padding: 70px 54px 42px;
  border-bottom: 3px solid #edf0f8;
  font-size: 57px;
  font-weight: 500;
  line-height: 80px;
}
.diary h3 {
  padding: 75px 60px 0;
  color: #222;
  font-size: 45px;
  font-weight: 400;
  line-height: 64px;
}
.home-bar {
  width: 420px;
  height: 15px;
  margin: auto auto 0;
  border-radius: 8px;
  background: #000;
}
</style>
